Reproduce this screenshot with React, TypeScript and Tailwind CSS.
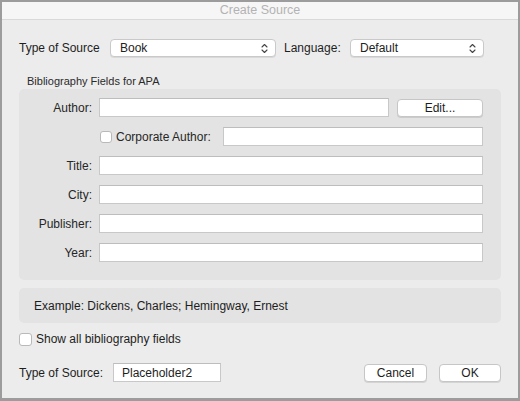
import React from "react";

const font = { fontFamily: '"Liberation Sans", Arial, sans-serif' };

const Chevrons = () => (
  <svg width="7" height="11" viewBox="0 0 7 11" fill="none" stroke="#444" strokeWidth="1.1" strokeLinecap="round" strokeLinejoin="round">
    <path d="M1 4 L3.5 1.5 L6 4" />
    <path d="M1 7 L3.5 9.5 L6 7" />
  </svg>
);

const Select = ({ value, width }: { value: string; width: string }) => (
  <div
    className={`${width} h-[18px] flex items-center justify-between pl-[9px] pr-[7px] bg-white rounded-[4px] border border-[#c9c9c9] shadow-[0_1px_0_rgba(0,0,0,0.08)] text-[12px] text-[#222]`}
  >
    <span>{value}</span>
    <Chevrons />
  </div>
);

const Input = ({ className = "", value = "" }: { className?: string; value?: string }) => (
  <div
    className={`h-[19px] bg-white border border-[#c8c8c8] border-t-[#bdbdbd] flex items-center pl-[8px] text-[12px] text-[#1e1e1e] ${className}`}
  >
    {value}
  </div>
);

const Button = ({ label, className = "" }: { label: string; className?: string }) => (
  <div
    className={`h-[18px] flex items-center justify-center bg-white rounded-[4px] border border-[#c6c6c6] shadow-[0_1px_0_rgba(0,0,0,0.1)] text-[12px] text-[#1e1e1e] ${className}`}
  >
    {label}
  </div>
);

const Checkbox = ({ className = "" }: { className?: string }) => (
  <div className={`w-[12px] h-[12px] rounded-[3px] bg-white border border-[#b9b9b9] ${className}`} />
);

const FieldRow = ({ label }: { label: string }) => (
  <div className="flex items-center h-[19px]">
    <span className="w-[73px] text-right text-[12px] text-[#262626]">{label}</span>
    <Input className="ml-[7px] flex-1" />
  </div>
);

export default function App() {
  return (
    <div
      style={font}
      className="w-[520px] h-[401px] flex flex-col bg-[#ececec] border-2 border-b-[3px] border-[#9c9c9c] overflow-hidden"
    >
      <div className="h-[18px] shrink-0 bg-[#f6f6f6] border-b border-[#d9d9d9] flex items-center justify-center text-[12.5px] text-[#b3b3b3]">
        Create Source
      </div>

      <div className="flex flex-col px-[17px] pt-[19px]">
        <div className="flex items-center h-[18px]">
          <span className="w-[91px] text-[12px] text-[#1e1e1e]">Type of Source</span>
          <Select value="Book" width="w-[166px]" />
          <span className="ml-[8px] w-[66px] text-[12px] text-[#1e1e1e]">Language:</span>
          <Select value="Default" width="w-[134px]" />
        </div>

        <div className="mt-[18px] h-[14px] pl-[8px] text-[11px] leading-[12px] text-[#2a2a2a]">
          Bibliography Fields for APA
        </div>

        <div className="rounded-[5px] bg-[#e3e3e3] pt-[9px] pb-[18px] pr-[18px] flex flex-col gap-[10px]">
          <div className="flex items-center h-[19px]">
            <span className="w-[73px] text-right text-[12px] text-[#262626]">Author:</span>
            <Input className="ml-[7px] flex-1" />
            <Button label="Edit..." className="ml-[8px] w-[86px]" />
          </div>
          <div className="flex items-center h-[19px] pl-[81px]">
            <Checkbox />
            <span className="ml-[4px] w-[107px] text-[12px] text-[#262626]">Corporate Author:</span>
            <Input className="flex-1" />
          </div>
          <FieldRow label="Title:" />
          <FieldRow label="City:" />
          <FieldRow label="Publisher:" />
          <FieldRow label="Year:" />
        </div>

        <div className="mt-[8px] h-[35px] rounded-[5px] bg-[#e3e3e3] flex items-center pl-[15px] text-[12px] text-[#1e1e1e]">
          Example: Dickens, Charles; Hemingway, Ernest
        </div>

        <div className="mt-[9px] h-[14px] flex items-center">
          <Checkbox className="w-[13px] h-[13px]" />
          <span className="ml-[4px] text-[12px] text-[#1e1e1e]">Show all bibliography fields</span>
        </div>

        <div className="mt-[17px] h-[19px] flex items-center">
          <span className="w-[94px] text-[12px] text-[#1e1e1e]">Type of Source:</span>
          <Input value="Placeholder2" className="w-[108px] pl-[5px]" />
          <div className="flex-1" />
          <Button label="Cancel" className="w-[63px]" />
          <Button label="OK" className="ml-[12px] w-[62px]" />
        </div>
      </div>
    </div>
  );
}
